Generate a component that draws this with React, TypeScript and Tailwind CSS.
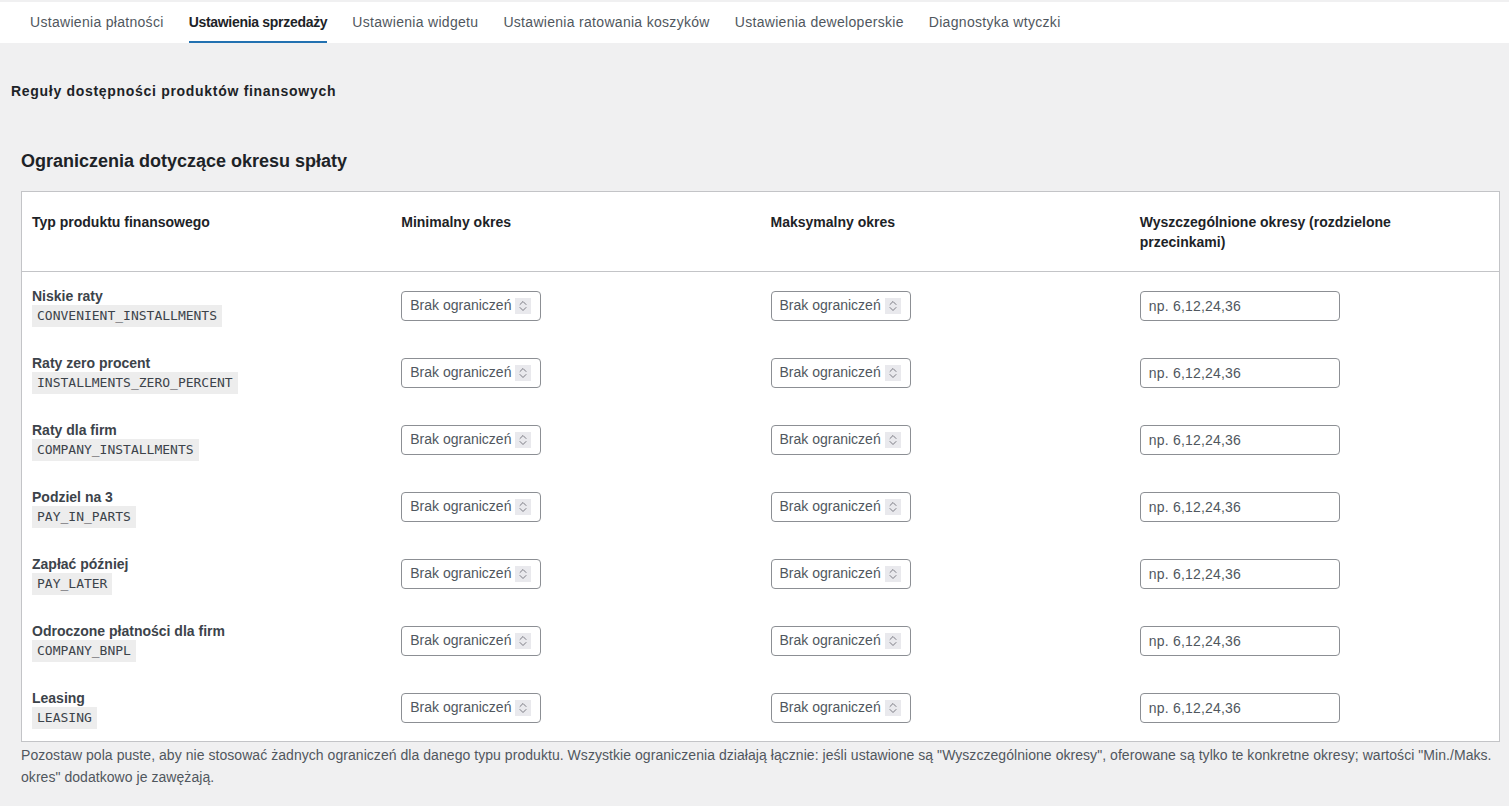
import React from 'react'

const tabs = [
  'Ustawienia płatności',
  'Ustawienia sprzedaży',
  'Ustawienia widgetu',
  'Ustawienia ratowania koszyków',
  'Ustawienia deweloperskie',
  'Diagnostyka wtyczki',
]

const products = [
  { name: 'Niskie raty', code: 'CONVENIENT_INSTALLMENTS' },
  { name: 'Raty zero procent', code: 'INSTALLMENTS_ZERO_PERCENT' },
  { name: 'Raty dla firm', code: 'COMPANY_INSTALLMENTS' },
  { name: 'Podziel na 3', code: 'PAY_IN_PARTS' },
  { name: 'Zapłać później', code: 'PAY_LATER' },
  { name: 'Odroczone płatności dla firm', code: 'COMPANY_BNPL' },
  { name: 'Leasing', code: 'LEASING' },
]

// number field with the always-visible spinner box
function PeriodInput() {
  return (
    <div className="flex h-[30px] w-[140px] items-center rounded-[4px] border border-[#8c8f94] bg-white pl-2 pr-[9px]">
      <input
        type="text"
        placeholder="Brak ograniczeń"
        className="w-0 min-w-0 flex-1 bg-transparent text-[14px] text-[#3c434a] outline-none placeholder:text-[#50575e]"
      />
      <span className="ml-[2px] flex h-[16px] w-[16px] items-center justify-center bg-[#e9e9ed]">
        <svg width="8" height="12" viewBox="0 0 8 12" fill="none" stroke="#7a7a82" strokeWidth="1" strokeLinecap="round" strokeLinejoin="round">
          <path d="M1 4.5 4 1.5 7 4.5" />
          <path d="M1 7.5 4 10.5 7 7.5" />
        </svg>
      </span>
    </div>
  )
}

export default function App() {
  return (
    <div className="min-h-screen bg-[#f0f0f1] pt-[2px] text-[#1d2327]" style={{ fontFamily: '"Liberation Sans", Arial, sans-serif' }}>
      {/* Tabs */}
      <nav className="flex h-[41px] gap-[25px] bg-white pl-[30px]">
        {tabs.map((t, i) => (
          <div
            key={t}
            className={`flex items-center border-b-2 pt-[2px] text-[14px] ${
              i === 1
                ? 'border-[#2271b1] font-semibold tracking-[-0.3px] text-[#1d2327]'
                : 'border-transparent tracking-[0.3px] text-[#50575e]'
            }`}
          >
            {t}
          </div>
        ))}
      </nav>

      <div className="pl-[11px] pr-[9px]">
        <h3 className="mt-[38px] text-[14px] font-bold leading-5 tracking-[0.7px]">Reguły dostępności produktów finansowych</h3>

        <div className="pl-[10px]">
          <h2 className="mt-[48px] text-[18px] font-semibold leading-6">Ograniczenia dotyczące okresu spłaty</h2>

          <div className="mt-[18px] border border-[#c3c4c7] bg-white">
            <div className="grid grid-cols-4 border-b border-[#c3c4c7] text-[14px] font-bold leading-5">
              <div className="px-[10px] pb-[19px] pt-5">Typ produktu finansowego</div>
              <div className="px-[10px] pb-[19px] pt-5">Minimalny okres</div>
              <div className="px-[10px] pb-[19px] pt-5">Maksymalny okres</div>
              <div className="px-[10px] pb-[19px] pt-5">
                <div className="max-w-[290px]">Wyszczególnione okresy (rozdzielone przecinkami)</div>
              </div>
            </div>

            {products.map((p) => (
              <div key={p.code} className="grid grid-cols-4 items-center">
                <div className="px-[10px] pb-[12px] pt-[15px]">
                  <div className="text-[14px] font-bold leading-[18px] text-[#3c434a]">{p.name}</div>
                  <code
                    className="block h-[22px] w-fit bg-[#ededed] px-[5px] text-[13px] leading-[22px] text-[#3c434a]"
                    style={{ fontFamily: '"DejaVu Sans Mono", "Liberation Mono", monospace' }}
                  >
                    {p.code}
                  </code>
                </div>
                <div className="px-[10px]">
                  <PeriodInput />
                </div>
                <div className="px-[10px]">
                  <PeriodInput />
                </div>
                <div className="px-[10px]">
                  <input
                    type="text"
                    placeholder="np. 6,12,24,36"
                    className="h-[30px] w-[200px] rounded-[4px] border border-[#8c8f94] bg-white px-2 text-[14px] tracking-[0.2px] outline-none placeholder:text-[#50575e]"
                  />
                </div>
              </div>
            ))}
          </div>

          <p className="mt-[2px] text-[14px] leading-[22px] tracking-[0.05px] text-[#50575e]">
            Pozostaw pola puste, aby nie stosować żadnych ograniczeń dla danego typu produktu. Wszystkie ograniczenia działają łącznie: jeśli ustawione są "Wyszczególnione okresy", oferowane są tylko te konkretne okresy; wartości "Min./Maks. okres" dodatkowo je zawężają.
          </p>
        </div>
      </div>
    </div>
  )
}
